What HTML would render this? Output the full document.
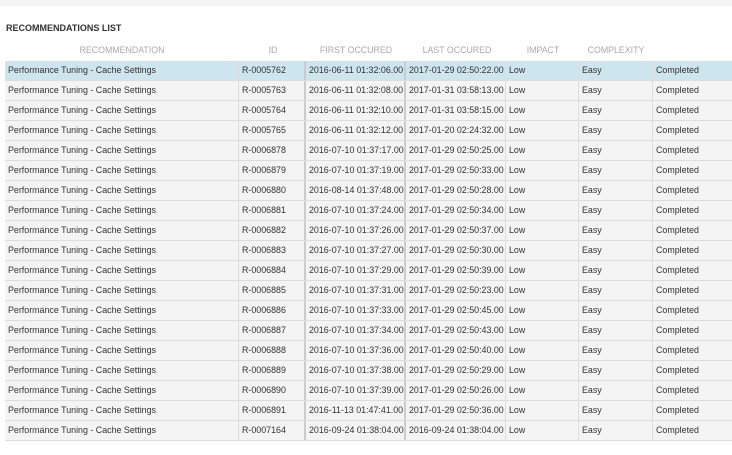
<!DOCTYPE html><html><head><style>
body{margin:0;width:732px;height:455px;background:#fff;font-family:"Liberation Sans",sans-serif;overflow:hidden;position:relative}
.top{position:absolute;left:0;top:0;width:732px;height:6px;background:#f4f4f4}
.title{position:absolute;left:6px;top:23px;font-size:9px;font-weight:bold;color:#333}
.h{position:absolute;top:45px;font-size:8.8px;color:#aaa;white-space:nowrap;transform:translateX(-50%)}
.row{position:absolute;left:5px;width:727px;height:19px;background:#f4f4f4;border-bottom:1px solid #ddd}
.row.sel{background:#cde5ef}
.c{position:absolute;top:0;height:19px;line-height:19px;font-size:8.9px;color:#333;white-space:nowrap;overflow:hidden;padding-left:3px;box-sizing:border-box;border-left:1px solid #ddd}
</style></head><body>
<div class="top"></div>
<div class="title">RECOMMENDATIONS LIST</div>
<div class="h" style="left:122px">RECOMMENDATION</div>
<div class="h" style="left:273px">ID</div>
<div class="h" style="left:356px">FIRST OCCURED</div>
<div class="h" style="left:457px">LAST OCCURED</div>
<div class="h" style="left:543px">IMPACT</div>
<div class="h" style="left:616px">COMPLEXITY</div>
<div id="t"></div>
<script>
var d=[["R-0005762","2016-06-11 01:32:06.00","2017-01-29 02:50:22.00"],["R-0005763","2016-06-11 01:32:08.00","2017-01-31 03:58:13.00"],["R-0005764","2016-06-11 01:32:10.00","2017-01-31 03:58:15.00"],["R-0005765","2016-06-11 01:32:12.00","2017-01-20 02:24:32.00"],["R-0006878","2016-07-10 01:37:17.00","2017-01-29 02:50:25.00"],["R-0006879","2016-07-10 01:37:19.00","2017-01-29 02:50:33.00"],["R-0006880","2016-08-14 01:37:48.00","2017-01-29 02:50:28.00"],["R-0006881","2016-07-10 01:37:24.00","2017-01-29 02:50:34.00"],["R-0006882","2016-07-10 01:37:26.00","2017-01-29 02:50:37.00"],["R-0006883","2016-07-10 01:37:27.00","2017-01-29 02:50:30.00"],["R-0006884","2016-07-10 01:37:29.00","2017-01-29 02:50:39.00"],["R-0006885","2016-07-10 01:37:31.00","2017-01-29 02:50:23.00"],["R-0006886","2016-07-10 01:37:33.00","2017-01-29 02:50:45.00"],["R-0006887","2016-07-10 01:37:34.00","2017-01-29 02:50:43.00"],["R-0006888","2016-07-10 01:37:36.00","2017-01-29 02:50:40.00"],["R-0006889","2016-07-10 01:37:38.00","2017-01-29 02:50:29.00"],["R-0006890","2016-07-10 01:37:39.00","2017-01-29 02:50:26.00"],["R-0006891","2016-11-13 01:47:41.00","2017-01-29 02:50:36.00"],["R-0007164","2016-09-24 01:38:04.00","2016-09-24 01:38:04.00"]];
var cols=[[0,233],[233,67],[299,101],[399,101],[500,73],[573,74],[647,80]];
var h="";
d.forEach(function(r,i){
var v=["Performance Tuning - Cache Settings",r[0],r[1],r[2],"Low","Easy","Completed"];
h+='<div class="row'+(i==0?' sel':'')+'" style="top:'+(61+i*20)+'px">';
v.forEach(function(x,j){var b=(j==2||j==3)?'border-left:2px solid #ccc;':(j==0?'border-left:0;':'');
h+='<div class="c" style="left:'+cols[j][0]+'px;width:'+cols[j][1]+'px;'+b+'">'+x+'</div>';});
h+='</div>';});
document.getElementById("t").innerHTML=h;
</script>
</body></html>
